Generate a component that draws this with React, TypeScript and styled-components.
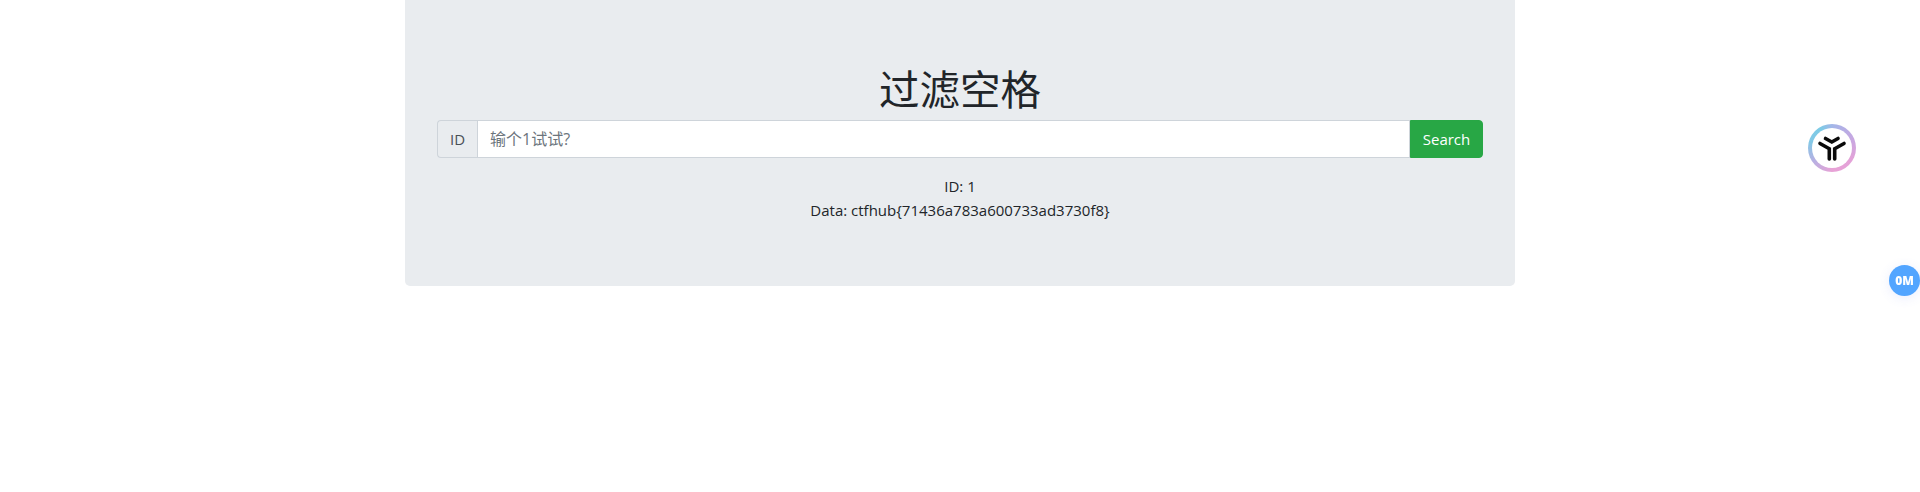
import React from "react";
import styled, { createGlobalStyle } from "styled-components";

const Global = createGlobalStyle`
  html, body { margin: 0; padding: 0; background: #fff; height: 100%; overflow: hidden; }
  body {
    font-family: "Open Sans", "Noto Sans CJK SC", sans-serif;
    font-size: 16px; line-height: 24px; color: #212529;
  }
  * { box-sizing: border-box; }
`;

const Container = styled.main`
  width: 1140px;
  margin: 0 auto;
  padding: 0 15px;
`;

const Jumbotron = styled.section`
  background: #e9ecef;
  border-radius: 0 0 5px 5px;
  padding: 64px 32px;
  text-align: center;
`;

const Title = styled.h1`
  margin: 0 0 8px;
  font-size: 40.5px;
  line-height: 48px;
  font-weight: 400;
  font-family: "Noto Sans CJK SC", sans-serif;
`;

const InputGroup = styled.form`
  display: flex;
  height: 38px;
  margin: 0 0 16px;
`;

const Addon = styled.span`
  display: flex;
  align-items: center;
  padding: 0 12px;
  background: #e9ecef;
  border: 1px solid #ced4da;
  border-right: 0;
  border-radius: 4px 0 0 4px;
  color: #495057;
  font-size: 15px;
`;

const Field = styled.input`
  flex: 1;
  min-width: 0;
  padding: 0 12px;
  border: 1px solid #ced4da;
  background: #fff;
  font: 16px "Open Sans", "Noto Sans CJK SC", sans-serif;
  color: #495057;
  outline: 0;
  &::placeholder { color: #6c757d; opacity: 1; }
`;

const Submit = styled.button`
  width: 73px;
  border: 1px solid #28a745;
  background: #28a745;
  color: #fff;
  border-radius: 0 4px 4px 0;
  font: 15px "Open Sans", sans-serif;
  padding: 0;
`;

const ResultLine = styled.div`
  font-size: 15px;
  line-height: 24px;
`;

const Floating = styled.div`
  position: fixed;
  border-radius: 50%;
`;

const LogoBadge = styled(Floating)`
  left: 1808px;
  top: 124px;
  width: 48px;
  height: 48px;
  padding: 4px;
  background: conic-gradient(#a3b6e8 0deg, #c4a8e2 60deg, #e3a2d8 120deg, #e8a2d6 180deg, #b6b0e2 235deg, #84c8e6 285deg, #7ccbe6 330deg, #a3b6e8 360deg);
`;

const LogoInner = styled.div`
  width: 40px;
  height: 40px;
  border-radius: 50%;
  background: #fff;
`;

const SizeBadge = styled(Floating)`
  left: 1889px;
  top: 265px;
  width: 31px;
  height: 31px;
  background: #52a5ff;
  color: #fff;
  font: 800 12px/31px "Open Sans", sans-serif;
  text-align: center;
  box-shadow: 0 2px 12px rgba(80, 110, 240, 0.12);
`;

export default function App() {
  return (
    <>
      <Global />
      <Container>
        <Jumbotron>
          <Title>过滤空格</Title>
          <InputGroup onSubmit={(e) => e.preventDefault()}>
            <Addon>ID</Addon>
            <Field placeholder="输个1试试?" />
            <Submit type="submit">Search</Submit>
          </InputGroup>
          <ResultLine>ID: 1</ResultLine>
          <ResultLine>Data: ctfhub&#123;71436a783a600733ad3730f8&#125;</ResultLine>
        </Jumbotron>
      </Container>
      <LogoBadge>
        <LogoInner>
          <svg width="40" height="40" viewBox="0 0 40 40" fill="none" stroke="#0a0a0a" strokeWidth="3.6" strokeLinecap="round" strokeLinejoin="miter">
            <path d="M13.5 10.5 L19.8 14 L26 10.5" />
            <path d="M8 15.5 L17.3 20.7 V31" />
            <path d="M32 15.5 L22.7 20.7 V31" />
          </svg>
        </LogoInner>
      </LogoBadge>
      <SizeBadge>0M</SizeBadge>
    </>
  );
}
